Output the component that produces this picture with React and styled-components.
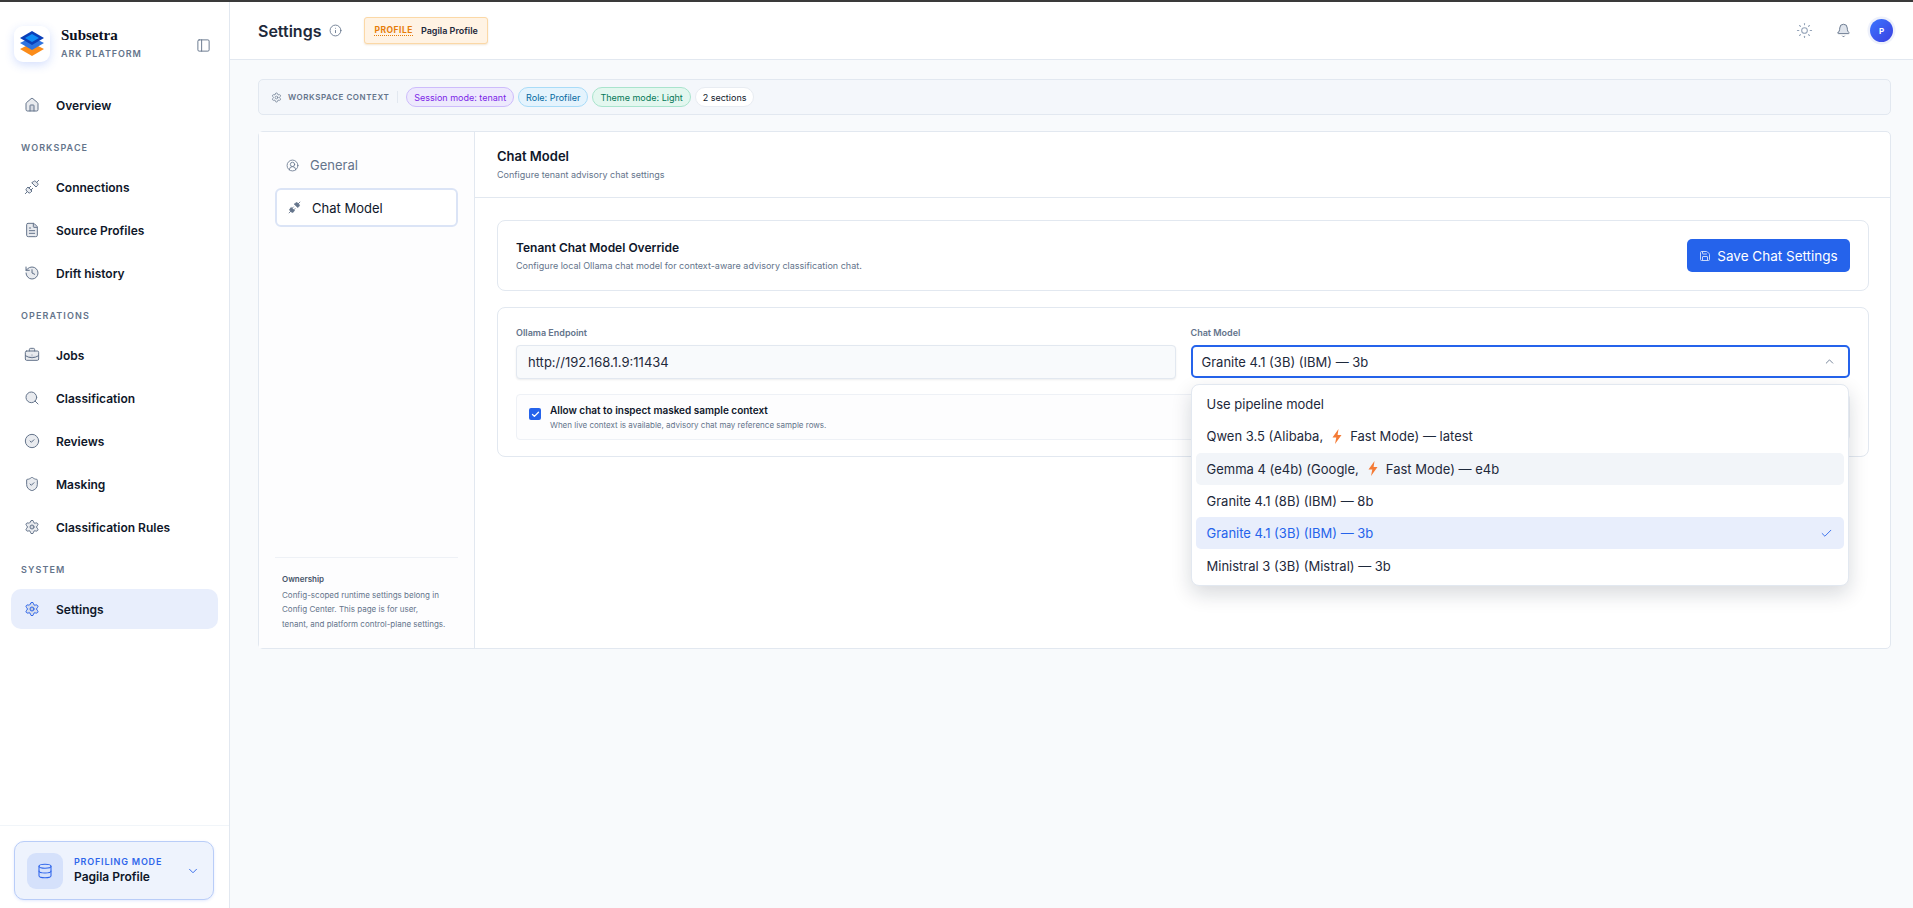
import React from "react";
import styled, { createGlobalStyle } from "styled-components";
import {
  Home,
  Unplug,
  FileText,
  History,
  BriefcaseBusiness,
  Search,
  CircleCheck,
  ShieldCheck,
  Settings,
  Database,
  ChevronDown,
  ChevronUp,
  PanelLeft,
  Info,
  Sun,
  Bell,
  CircleUserRound,
  Save,
  Check,
} from "lucide-react";

const GlobalStyle = createGlobalStyle`
  html, body {
    margin: 0;
    padding: 0;
    height: 100%;
    overflow: hidden;
    background: #f8fafc;
    font-family: "Inter", "Liberation Sans", sans-serif;
    color: #0f172a;
  }
  * { box-sizing: border-box; }
`;

const Page = styled.div`
  height: 908px;
  display: flex;
  flex-direction: column;
  border-top: 2px solid #3a3a3a;
`;

const Shell = styled.div`
  flex: 1;
  display: flex;
  min-height: 0;
`;

const Sidebar = styled.aside`
  width: 230px;
  flex: none;
  display: flex;
  flex-direction: column;
  background: #fff;
  border-right: 1px solid #e2e8f0;
`;

const Brand = styled.div`
  height: 83px;
  padding: 24px 18px 0 14px;
  display: flex;
  align-items: flex-start;
`;

const LogoTile = styled.div`
  width: 36px;
  height: 36px;
  border-radius: 9px;
  background: #fff;
  box-shadow: 0 3px 10px rgba(59, 110, 246, 0.22);
  display: flex;
  align-items: center;
  justify-content: center;
  flex: none;
`;

const BrandText = styled.div`
  margin-left: 11px;
  flex: 1;
`;

const BrandName = styled.div`
  font-family: "Liberation Serif", serif;
  font-weight: 700;
  font-size: 15px;
  line-height: 18px;
  margin-top: 0;
  color: #0b1020;
`;

const BrandSub = styled.div`
  font-size: 9px;
  font-weight: 600;
  letter-spacing: 0.9px;
  line-height: 12px;
  margin-top: 4px;
  color: #64748b;
`;

const CollapseButton = styled.div`
  color: #64748b;
  margin-top: 12px;
  display: flex;
`;

const Nav = styled.nav`
  flex: 1;
  padding: 0 11px;
`;

const SectionLabel = styled.div`
  font-size: 9px;
  font-weight: 600;
  letter-spacing: 1.1px;
  line-height: 14px;
  padding: 16px 0 12px 10px;
  color: #64748b;
`;

const NavGroup = styled.div`
  display: flex;
  flex-direction: column;
  gap: 3px;
`;

const NavItem = styled.div`
  height: 40px;
  border-radius: 10px;
  display: flex;
  align-items: center;
  padding-left: 13px;
  gap: 16px;
  font-size: 12px;
  font-weight: 600;
  color: #0f172a;
  background: ${(p) => (p.$active ? "#e8eefc" : "transparent")};
  svg {
    color: ${(p) => (p.$active ? "#2f66eb" : "#64748b")};
    flex: none;
  }
`;

const SidebarFooter = styled.div`
  border-top: 1px solid #f1f5f9;
  height: 83px;
  padding: 15px 15px 0 14px;
`;

const ProfileCard = styled.div`
  height: 59px;
  border-radius: 10px;
  border: 1px solid #b9cdf8;
  background: #eef3fd;
  box-shadow: 0 1px 3px rgba(59, 110, 246, 0.15);
  display: flex;
  align-items: center;
  padding: 0 13px 0 12px;
`;

const ProfileIcon = styled.div`
  width: 36px;
  height: 36px;
  border-radius: 9px;
  background: #d5e1fb;
  color: #2f66eb;
  display: flex;
  align-items: center;
  justify-content: center;
  flex: none;
`;

const ProfileText = styled.div`
  flex: 1;
  margin-left: 11px;
`;

const ProfileMode = styled.div`
  font-size: 9px;
  font-weight: 600;
  letter-spacing: 0.8px;
  line-height: 12px;
  color: #2f66eb;
`;

const ProfileName = styled.div`
  font-size: 12px;
  font-weight: 600;
  line-height: 17px;
  color: #0f172a;
`;

const ProfileChevron = styled.div`
  color: #2f66eb;
  display: flex;
`;

const Main = styled.main`
  flex: 1;
  min-width: 0;
  display: flex;
  flex-direction: column;
`;

const Header = styled.header`
  height: 58px;
  flex: none;
  background: #fff;
  border-bottom: 1px solid #e2e8f0;
  display: flex;
  align-items: center;
  padding: 0 20px 0 28px;
`;

const Title = styled.h1`
  margin: 0;
  font-size: 16px;
  font-weight: 600;
  color: #1e293b;
`;

const InfoIcon = styled.div`
  display: flex;
  color: #64748b;
  margin-left: 8px;
`;

const ProfileChip = styled.div`
  margin-left: 22px;
  height: 27px;
  padding: 0 9px;
  border-radius: 3px;
  background: #fff3e4;
  border: 1px solid #fbd8a6;
  box-shadow: 0 1px 2px rgba(180, 110, 20, 0.18);
  display: flex;
  align-items: center;
  gap: 8px;
  font-size: 9px;
  font-weight: 600;
  color: #1e293b;
`;

const ChipKey = styled.span`
  color: #e67e0a;
  font-size: 8.5px;
  font-weight: 700;
  letter-spacing: 0.5px;
  border-bottom: 1px dotted #e67e0a;
`;

const HeaderActions = styled.div`
  margin-left: auto;
  display: flex;
  align-items: center;
  color: #94a3b8;
`;

const HeaderIcon = styled.div`
  display: flex;
  margin-right: ${(p) => p.$gap}px;
  color: ${(p) => p.$color};
`;

const Avatar = styled.div`
  width: 23px;
  height: 23px;
  border-radius: 50%;
  background: linear-gradient(135deg, #3b76ff, #3b3fe0);
  box-shadow: 0 0 0 2.5px #eef1fb;
  color: #fff;
  font-size: 8px;
  font-weight: 700;
  display: flex;
  align-items: center;
  justify-content: center;
  margin-right: 0;
`;

const Content = styled.div`
  flex: 1;
  padding: 19px 22px 0 28px;
  display: flex;
  flex-direction: column;
  gap: 16px;
`;

const ContextBar = styled.div`
  height: 36px;
  border-radius: 5px;
  border: 1px solid #e2e8f0;
  background: #f4f7fb;
  display: flex;
  align-items: center;
  padding: 0 12px;
`;

const ContextLabel = styled.div`
  display: flex;
  align-items: center;
  gap: 6px;
  font-size: 8px;
  font-weight: 600;
  letter-spacing: 0.55px;
  color: #64748b;
  padding-right: 8px;
  margin-right: 8px;
  border-right: 1px solid #e2e8f0;
  height: 12px;
`;

const Pills = styled.div`
  display: flex;
  gap: 4px;
`;

const Pill = styled.span`
  height: 20px;
  padding: 0 7px;
  border-radius: 10px;
  border: 1px solid ${(p) => p.$border};
  background: ${(p) => p.$bg};
  color: ${(p) => p.$color};
  font-size: 9px;
  display: flex;
  align-items: center;
`;

const SettingsCard = styled.section`
  height: 518px;
  border-radius: 5px;
  border: 1px solid #e2e8f0;
  background: #fff;
  display: flex;
`;

const SideTabs = styled.div`
  width: 216px;
  flex: none;
  border-right: 1px solid #e2e8f0;
  background: #fdfdfe;
  padding: 13px 16px 0;
  display: flex;
  flex-direction: column;
`;

const Tab = styled.div`
  height: ${(p) => (p.$active ? 39 : 40)}px;
  margin-bottom: 3px;
  display: flex;
  align-items: center;
  padding-left: 11px;
  gap: 11px;
  font-size: 13px;
  font-weight: 400;
  color: ${(p) => (p.$active ? "#0f172a" : "#64748b")};
  border-radius: 6px;
  background: ${(p) => (p.$active ? "#fff" : "transparent")};
  border: ${(p) => (p.$active ? "2px solid #dbe4f6" : "none")};
  svg {
    color: #64748b;
    flex: none;
  }
`;

const Ownership = styled.div`
  margin-top: auto;
  border-top: 1px solid #eef1f6;
  padding: 14px 7px 17px;
  color: #64748b;
  font-size: 8px;
  line-height: 14.5px;
`;

const OwnershipTitle = styled.div`
  font-weight: 600;
  color: #475569;
  margin-bottom: 1px;
`;

const Pane = styled.div`
  flex: 1;
  min-width: 0;
  display: flex;
  flex-direction: column;
`;

const PaneHeader = styled.div`
  height: 66px;
  flex: none;
  border-bottom: 1px solid #e2e8f0;
  padding: 15px 22px 0;
`;

const PaneTitle = styled.div`
  font-size: 13px;
  font-weight: 600;
  line-height: 18px;
  color: #0f172a;
`;

const PaneSub = styled.div`
  font-size: 9px;
  line-height: 14px;
  margin-top: 3px;
  color: #64748b;
`;

const PaneBody = styled.div`
  padding: 22px 21px 0 22px;
  display: flex;
  flex-direction: column;
  gap: 16px;
`;

const Panel = styled.div`
  border: 1px solid #e2e8f0;
  border-radius: 8px;
  background: #fff;
`;

const OverrideRow = styled(Panel)`
  height: 71px;
  display: flex;
  align-items: center;
  justify-content: space-between;
  padding: 0 18px 0 18px;
`;

const OverrideTitle = styled.div`
  font-size: 12px;
  font-weight: 600;
  line-height: 17px;
`;

const OverrideSub = styled.div`
  font-size: 9px;
  line-height: 14px;
  margin-top: 3px;
  color: #64748b;
`;

const SaveButton = styled.button`
  height: 33px;
  width: 163px;
  border: none;
  border-radius: 5px;
  background: #2563eb;
  color: #fff;
  font-family: inherit;
  font-size: 13.5px;
  display: flex;
  align-items: center;
  justify-content: center;
  gap: 6px;
  svg {
    opacity: 0.75;
  }
`;

const FormPanel = styled(Panel)`
  height: 150px;
  padding: 19px 18px 0;
`;

const FormGrid = styled.div`
  display: grid;
  grid-template-columns: 1fr 1fr;
  column-gap: 15px;
`;

const Field = styled.div`
  position: relative;
`;

const FieldLabel = styled.div`
  font-size: 9px;
  font-weight: 600;
  line-height: 12px;
  margin-bottom: 6px;
  color: #64748b;
`;

const TextInput = styled.div`
  height: 34px;
  border-radius: 4px;
  border: 1px solid #e2e8f0;
  background: #f8fafc;
  box-shadow: 0 1px 2px rgba(15, 23, 42, 0.08);
  display: flex;
  align-items: center;
  padding: 0 11px;
  font-size: 13px;
  color: #1e293b;
`;

const SelectTrigger = styled.div`
  height: 33px;
  border-radius: 5px;
  border: 2px solid #2563eb;
  background: #fff;
  display: flex;
  align-items: center;
  justify-content: space-between;
  padding: 0 12px 0 9px;
  font-size: 13px;
  color: #1e293b;
  svg {
    color: #64748b;
  }
`;

const Dropdown = styled.div`
  position: absolute;
  top: 57px;
  left: 0;
  right: 1px;
  height: 202px;
  border-radius: 8px;
  border: 1px solid #e2e8f0;
  background: #fff;
  box-shadow: 0 8px 20px rgba(15, 23, 42, 0.16);
  padding: 3px 4px;
  z-index: 5;
`;

const Option = styled.div`
  height: 32.3px;
  border-radius: 5px;
  display: flex;
  align-items: center;
  justify-content: space-between;
  padding: 0 11px 0 11px;
  font-size: 13px;
  color: ${(p) => (p.$selected ? "#2563eb" : "#1e293b")};
  background: ${(p) => (p.$selected ? "#e8eefc" : p.$hover ? "#f2f5f9" : "transparent")};
`;

const OptionLabel = styled.span`
  display: flex;
  align-items: center;
  white-space: pre;
`;

const Bolt = styled.svg`
  width: 12px;
  height: 15px;
  margin: 0 7px 0 8px;
`;

const CheckRow = styled.div`
  margin-top: 15px;
  height: 46px;
  border-radius: 4px;
  border: 1px solid #eef1f6;
  background: #fdfdfe;
  display: flex;
  align-items: center;
  padding: 0 12px;
  gap: 9px;
`;

const CheckBox = styled.div`
  width: 12px;
  height: 12px;
  border-radius: 2px;
  background: #2563eb;
  color: #fff;
  display: flex;
  align-items: center;
  justify-content: center;
  flex: none;
  margin-top: -6px;
`;

const CheckTitle = styled.div`
  font-size: 10px;
  font-weight: 600;
  line-height: 14px;
`;

const CheckSub = styled.div`
  font-size: 8px;
  line-height: 12px;
  margin-top: 2px;
  color: #64748b;
`;

const FILL = { fill: "rgba(100,116,139,0.14)" };

function LogoMark() {
  return (
    <svg width="28" height="30" viewBox="0 0 28 30">
      <path d="M2 20l12-6 12 6-12 7z" fill="#fb8c1a" />
      <path d="M2 14l12-6 12 6-12 7z" fill="#2f74e0" />
      <path d="M2 9l12-7 12 7-12 7z" fill="#0a3fb8" />
      <path d="M7 9l7-4 7 4-7 4z" fill="#0e8cf5" />
    </svg>
  );
}

function BoltIcon() {
  return (
    <Bolt viewBox="0 0 12 15">
      <path d="M7.5 0L1.5 8.5h3.8L4 15l6.5-9H6.6z" fill="#f47b36" />
    </Bolt>
  );
}

const groups = [
  {
    label: "WORKSPACE",
    items: [
      { name: "Connections", icon: Unplug },
      { name: "Source Profiles", icon: FileText },
      { name: "Drift history", icon: History },
    ],
  },
  {
    label: "OPERATIONS",
    items: [
      { name: "Jobs", icon: BriefcaseBusiness },
      { name: "Classification", icon: Search },
      { name: "Reviews", icon: CircleCheck },
      { name: "Masking", icon: ShieldCheck },
      { name: "Classification Rules", icon: Settings },
    ],
  },
  {
    label: "SYSTEM",
    items: [{ name: "Settings", icon: Settings, active: true }],
  },
];

const options = [
  { label: "Use pipeline model" },
  { label: "Qwen 3.5 (Alibaba,", bolt: true, tail: "Fast Mode) — latest" },
  { label: "Gemma 4 (e4b) (Google,", bolt: true, tail: "Fast Mode) — e4b", hover: true },
  { label: "Granite 4.1 (8B) (IBM) — 8b" },
  { label: "Granite 4.1 (3B) (IBM) — 3b", selected: true },
  { label: "Ministral 3 (3B) (Mistral) — 3b" },
];

export default function App() {
  return (
    <Page>
      <GlobalStyle />
      <Shell>
        <Sidebar>
          <Brand>
            <LogoTile>
              <LogoMark />
            </LogoTile>
            <BrandText>
              <BrandName>Subsetra</BrandName>
              <BrandSub>ARK PLATFORM</BrandSub>
            </BrandText>
            <CollapseButton>
              <PanelLeft size={15} strokeWidth={1.5} />
            </CollapseButton>
          </Brand>
          <Nav>
            <NavItem>
              <Home size={16} strokeWidth={1.5} style={FILL} />
              Overview
            </NavItem>
            {groups.map((group) => (
              <div key={group.label}>
                <SectionLabel>{group.label}</SectionLabel>
                <NavGroup>
                  {group.items.map((item) => (
                    <NavItem key={item.name} $active={item.active}>
                      <item.icon size={16} strokeWidth={1.5} style={FILL} />
                      {item.name}
                    </NavItem>
                  ))}
                </NavGroup>
              </div>
            ))}
          </Nav>
          <SidebarFooter>
            <ProfileCard>
              <ProfileIcon>
                <Database size={16} strokeWidth={1.6} />
              </ProfileIcon>
              <ProfileText>
                <ProfileMode>PROFILING MODE</ProfileMode>
                <ProfileName>Pagila Profile</ProfileName>
              </ProfileText>
              <ProfileChevron>
                <ChevronDown size={14} strokeWidth={1.6} />
              </ProfileChevron>
            </ProfileCard>
          </SidebarFooter>
        </Sidebar>
        <Main>
          <Header>
            <Title>Settings</Title>
            <InfoIcon>
              <Info size={13} strokeWidth={1.6} />
            </InfoIcon>
            <ProfileChip>
              <ChipKey>PROFILE</ChipKey>
              Pagila Profile
            </ProfileChip>
            <HeaderActions>
              <HeaderIcon $gap={23} $color="#94a3b8">
                <Sun size={17} strokeWidth={1.5} />
              </HeaderIcon>
              <HeaderIcon $gap={19} $color="#64748b">
                <Bell size={15} strokeWidth={1.5} fill="#dfe4ec" />
              </HeaderIcon>
              <Avatar>P</Avatar>
            </HeaderActions>
          </Header>
          <Content>
            <ContextBar>
              <ContextLabel>
                <Settings size={11} strokeWidth={1.5} />
                WORKSPACE CONTEXT
              </ContextLabel>
              <Pills>
                <Pill $bg="#ede9fd" $border="#cdbcfb" $color="#7c1fe8">
                  Session mode: tenant
                </Pill>
                <Pill $bg="#e4f3fd" $border="#a9dcf8" $color="#0369a1">
                  Role: Profiler
                </Pill>
                <Pill $bg="#e3f7ef" $border="#a9e4cd" $color="#047857">
                  Theme mode: Light
                </Pill>
                <Pill $bg="#fff" $border="#e8ecf2" $color="#0f172a">
                  2 sections
                </Pill>
              </Pills>
            </ContextBar>
            <SettingsCard>
              <SideTabs>
                <Tab>
                  <CircleUserRound size={13} strokeWidth={1.5} />
                  General
                </Tab>
                <Tab $active>
                  <Unplug size={13} strokeWidth={1.6} fill="#64748b" />
                  Chat Model
                </Tab>
                <Ownership>
                  <OwnershipTitle>Ownership</OwnershipTitle>
                  Config-scoped runtime settings belong in
                  <br />
                  Config Center. This page is for user,
                  <br />
                  tenant, and platform control-plane settings.
                </Ownership>
              </SideTabs>
              <Pane>
                <PaneHeader>
                  <PaneTitle>Chat Model</PaneTitle>
                  <PaneSub>Configure tenant advisory chat settings</PaneSub>
                </PaneHeader>
                <PaneBody>
                  <OverrideRow>
                    <div>
                      <OverrideTitle>Tenant Chat Model Override</OverrideTitle>
                      <OverrideSub>
                        Configure local Ollama chat model for context-aware advisory classification chat.
                      </OverrideSub>
                    </div>
                    <SaveButton>
                      <Save size={12} strokeWidth={2} />
                      Save Chat Settings
                    </SaveButton>
                  </OverrideRow>
                  <FormPanel>
                    <FormGrid>
                      <Field>
                        <FieldLabel>Ollama Endpoint</FieldLabel>
                        <TextInput>http://192.168.1.9:11434</TextInput>
                      </Field>
                      <Field>
                        <FieldLabel>Chat Model</FieldLabel>
                        <SelectTrigger>
                          Granite 4.1 (3B) (IBM) — 3b
                          <ChevronUp size={13} strokeWidth={1.6} />
                        </SelectTrigger>
                        <Dropdown>
                          {options.map((opt) => (
                            <Option key={opt.label} $hover={opt.hover} $selected={opt.selected}>
                              <OptionLabel>
                                {opt.label}
                                {opt.bolt && <BoltIcon />}
                                {opt.tail}
                              </OptionLabel>
                              {opt.selected && <Check size={13} strokeWidth={1.6} />}
                            </Option>
                          ))}
                        </Dropdown>
                      </Field>
                    </FormGrid>
                    <CheckRow>
                      <CheckBox>
                        <Check size={9} strokeWidth={3.5} />
                      </CheckBox>
                      <div>
                        <CheckTitle>Allow chat to inspect masked sample context</CheckTitle>
                        <CheckSub>When live context is available, advisory chat may reference sample rows.</CheckSub>
                      </div>
                    </CheckRow>
                  </FormPanel>
                </PaneBody>
              </Pane>
            </SettingsCard>
          </Content>
        </Main>
      </Shell>
    </Page>
  );
}
